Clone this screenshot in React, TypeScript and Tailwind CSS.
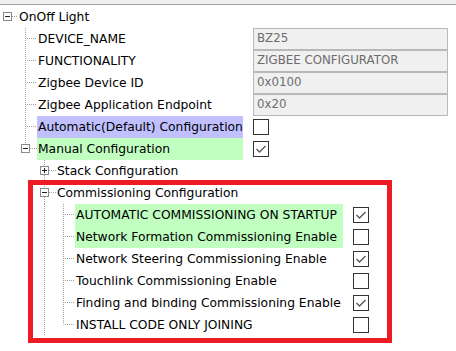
import React from "react";

type Line = "none" | "pass" | "tee" | "ell" | "root";

interface Row {
  label: string;
  level: number;
  last?: boolean;
  toggle?: "plus" | "minus";
  field?: string;
  check?: boolean;
  highlight?: string;
  labelW?: string;
  // vertical guide lines in the ancestor columns
  guides?: boolean[];
}

const rows: Row[] = [
  { label: "OnOff Light", level: 0, toggle: "minus" },
  { label: "DEVICE_NAME", level: 1, field: "BZ25", labelW: "w-[206px]" },
  { label: "FUNCTIONALITY", level: 1, field: "ZIGBEE CONFIGURATOR", labelW: "w-[206px]" },
  { label: "Zigbee Device ID", level: 1, field: "0x0100", labelW: "w-[206px]" },
  { label: "Zigbee Application Endpoint", level: 1, field: "0x20", labelW: "w-[206px]" },
  {
    label: "Automatic(Default) Configuration",
    level: 1,
    check: false,
    highlight: "bg-[#c0c0ff]",
    labelW: "w-[206px]",
  },
  {
    label: "Manual Configuration",
    level: 1,
    last: true,
    toggle: "minus",
    check: true,
    highlight: "bg-[#c0ffc0]",
    labelW: "w-[206px]",
  },
  { label: "Stack Configuration", level: 2, toggle: "plus", guides: [false] },
  { label: "Commissioning Configuration", level: 2, toggle: "minus", guides: [false] },
  {
    label: "AUTOMATIC COMMISSIONING ON STARTUP",
    level: 3,
    check: true,
    highlight: "bg-[#c0ffc0]",
    labelW: "w-[268px]",
    guides: [false, true],
  },
  {
    label: "Network Formation Commissioning Enable",
    level: 3,
    check: false,
    highlight: "bg-[#c0ffc0]",
    labelW: "w-[268px]",
    guides: [false, true],
  },
  {
    label: "Network Steering Commissioning Enable",
    level: 3,
    check: true,
    labelW: "w-[268px]",
    guides: [false, true],
  },
  {
    label: "Touchlink Commissioning Enable",
    level: 3,
    check: false,
    labelW: "w-[268px]",
    guides: [false, true],
  },
  {
    label: "Finding and binding Commissioning Enable",
    level: 3,
    check: true,
    labelW: "w-[268px]",
    guides: [false, true],
  },
  {
    label: "INSTALL CODE ONLY JOINING",
    level: 3,
    last: true,
    check: false,
    labelW: "w-[268px]",
    guides: [false, true],
  },
];

const DOT = "#a0a0a0";

function TreeCell({ width, line, toggle }: { width: number; line: Line; toggle?: "plus" | "minus" }) {
  const x = 7.5;
  const mid = 10.5;
  const top = line === "root" || line === "none" ? null : 0;
  const bottom = line === "pass" || line === "tee" ? 22 : mid;
  return (
    <svg width={width} height={22} className="shrink-0 block">
      {line === "pass" && (
        <line x1={x} y1={0} x2={x} y2={22} stroke={DOT} strokeDasharray="1 1" />
      )}
      {line !== "pass" && line !== "none" && (
        <>
          {top !== null && (
            <line x1={x} y1={top} x2={x} y2={toggle ? 6 : bottom} stroke={DOT} strokeDasharray="1 1" />
          )}
          {toggle && bottom === 22 && (
            <line x1={x} y1={15} x2={x} y2={22} stroke={DOT} strokeDasharray="1 1" />
          )}
          <line
            x1={toggle ? 12 : 9}
            y1={mid}
            x2={width}
            y2={mid}
            stroke={DOT}
            strokeDasharray="1 1"
          />
        </>
      )}
      {toggle && (
        <>
          <rect x={3.5} y={6.5} width={8} height={8} fill="#fff" stroke="#8a8a8a" />
          <line x1={5} y1={10.5} x2={10} y2={10.5} stroke="#222" />
          {toggle === "plus" && <line x1={7.5} y1={8} x2={7.5} y2={13} stroke="#222" />}
        </>
      )}
    </svg>
  );
}

function CheckBox({ checked }: { checked: boolean }) {
  return (
    <div className="w-4 h-4 border border-[#333] bg-white flex items-center justify-center">
      {checked && (
        <svg width={14} height={14} viewBox="0 0 14 14">
          <polyline points="2.5,7 5.5,10 11.5,4" fill="none" stroke="#555" strokeWidth={1.3} />
        </svg>
      )}
    </div>
  );
}

function TreeRow({ row }: { row: Row }) {
  const cells: React.ReactNode[] = [];
  for (let k = 0; k <= row.level; k++) {
    const width = k === 0 ? 18 : 19;
    let line: Line = "none";
    let toggle: "plus" | "minus" | undefined;
    if (k === row.level) {
      line = row.level === 0 ? "root" : row.last ? "ell" : "tee";
      toggle = row.toggle;
    } else if (k > 0) {
      line = row.guides?.[k - 1] ? "pass" : "none";
    }
    cells.push(<TreeCell key={k} width={width} line={line} toggle={toggle} />);
  }
  return (
    <div className="flex items-stretch h-[22px]">
      {cells}
      <div
        className={`${row.labelW ?? ""} ${row.highlight ?? ""} h-full flex items-center pl-[1px] whitespace-nowrap text-black`}
      >
        {row.label}
      </div>
      {row.field !== undefined && (
        <div className="ml-[10px] w-[195px] h-[22px] border border-[#b9b9b9] bg-[#f0f0f0] flex items-center pl-[3px] text-[11.8px] text-[#6d6d6d]">
          {row.field}
        </div>
      )}
      {row.check !== undefined && (
        <div className="ml-[10px] h-full flex items-center">
          <CheckBox checked={row.check} />
        </div>
      )}
    </div>
  );
}

export default function App() {
  return (
    <div
      className="relative w-[456px] h-[351px] bg-white overflow-hidden text-[12.3px]"
      style={{ fontFamily: '"DejaVu Sans", Verdana, sans-serif' }}
    >
      <div className="h-[4px] bg-[#f0f0f0]" />
      <div className="h-[1px] bg-[#a0a0a0]" />
      <div className="pt-[1px]">
        {rows.map((r) => (
          <TreeRow key={r.label} row={r} />
        ))}
      </div>
      <div className="absolute left-[28px] top-[180px] w-[364px] h-[163px] border-[5px] border-[#ed1c24]" />
    </div>
  );
}
